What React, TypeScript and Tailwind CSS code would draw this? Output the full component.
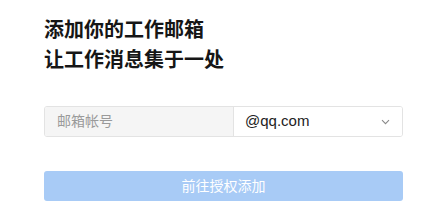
import React from "react";

export default function App() {
  return (
    <div
      className="w-[427px] h-[221px] bg-white px-[44px] pt-[15px]"
      style={{ fontFamily: '"Liberation Sans", "Noto Sans CJK SC", sans-serif' }}
    >
      <div className="text-[20px] leading-[30px] font-bold text-[#161616]">
        <div>添加你的工作邮箱</div>
        <div>让工作消息集于一处</div>
      </div>
      <div className="mt-[31px] flex h-[31px] w-[359px] rounded-[3px] border border-[#e3e3e3] overflow-hidden">
        <div className="flex w-[189px] items-center bg-[#f5f5f5] pl-[12px] text-[14px] text-[#9a9a9a] border-r border-[#e3e3e3]">
          邮箱帐号
        </div>
        <div className="flex flex-1 items-center justify-between bg-white pl-[11px] pr-[12px] text-[15px] text-[#222]">
          <span>@qq.com</span>
          <svg width="9" height="6" viewBox="0 0 9 6" fill="none">
            <path d="M1 1.2l3.5 3.5 3.5-3.5" stroke="#8a8a8a" strokeWidth="1.1" />
          </svg>
        </div>
      </div>
      <div className="mt-[34px] flex h-[30px] w-[359px] items-center justify-center rounded-[3px] bg-[#a8cbf6] text-[14px] text-white">
        前往授权添加
      </div>
    </div>
  );
}
